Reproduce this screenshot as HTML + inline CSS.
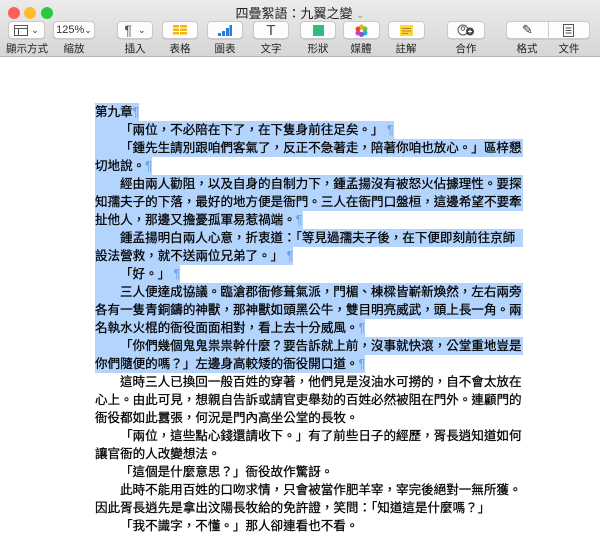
<!DOCTYPE html>
<html><head><meta charset="utf-8"><style>
*{margin:0;padding:0;box-sizing:border-box}
body{width:600px;height:523px;overflow:hidden;background:#fff;font-family:"Liberation Sans","Noto Sans CJK TC",sans-serif;position:relative}
.tb{position:absolute;left:0;top:0;width:600px;height:57px;background:linear-gradient(#ebebeb,#d6d6d6);border-bottom:1px solid #b5b5b5}
.dot{position:absolute;top:7px;width:12px;height:12px;border-radius:50%}
.title{position:absolute;top:3px;left:0;width:600px;text-align:center;font-size:13px;color:#222}
.btn{position:absolute;top:21px;height:18px;background:#fdfdfd;border:1px solid #c9c9c9;border-radius:4px;box-shadow:0 .5px 0 #bbb;font-size:11px;color:#333;display:flex;align-items:center;justify-content:center}
.lbl{position:absolute;top:41px;font-size:10.5px;color:#222;text-align:center}
.doc{position:absolute;left:95px;top:103px;width:428px;font-size:12.56px;line-height:18px;color:#000;-webkit-text-stroke:0.25px #000}
.l{height:18px;white-space:nowrap;overflow:visible}
.h{background:#b3d4fd}
span.h{display:inline-block;height:18px;vertical-align:top}
.p{color:#6a9fe6;-webkit-text-stroke:0}
.i{padding-left:25px}
</style></head><body>
<div class="tb">
<div class="dot" style="left:8px;background:#fc5f57"></div>
<div class="dot" style="left:24px;background:#fdbc2e"></div>
<div class="dot" style="left:41px;background:#2ac840"></div>
<div class="title">四疊絮語：九翼之變 <span style="color:#999;font-size:10px">⌄</span></div>
<div class="btn" style="left:8px;width:37px"><svg width="14" height="11"><rect x="0.5" y="0.5" width="13" height="10" fill="none" stroke="#555"/><line x1="0" y1="3.5" x2="14" y2="3.5" stroke="#555"/><line x1="4.5" y1="3" x2="4.5" y2="11" stroke="#555"/></svg>&nbsp;<span style="font-size:9px">⌄</span></div>
<div class="btn" style="left:53px;width:42px">125%<span style="font-size:9px">⌄</span></div>
<div class="btn" style="left:117px;width:36px"><span style="font-size:14px;color:#555">¶</span>&nbsp;&nbsp;<span style="font-size:9px">⌄</span></div>
<div class="btn" style="left:162px;width:36px"><svg width="14" height="10"><g fill="#f5b50f"><rect x="0" y="0" width="6" height="2.5"/><rect x="7" y="0" width="7" height="2.5"/><rect x="0" y="3.5" width="6" height="2.5"/><rect x="7" y="3.5" width="7" height="2.5"/><rect x="0" y="7" width="6" height="2.5"/><rect x="7" y="7" width="7" height="2.5"/></g></svg></div>
<div class="btn" style="left:207px;width:36px"><svg width="14" height="11"><g fill="#2a7be0"><rect x="0" y="8" width="3" height="3"/><rect x="4" y="6" width="3" height="5"/><rect x="8" y="3" width="3" height="8"/><rect x="11.5" y="0" width="2.5" height="11"/></g></svg></div>
<div class="btn" style="left:253px;width:36px;font-size:15px;color:#444">T</div>
<div class="btn" style="left:300px;width:36px"><div style="width:11px;height:11px;background:#2ebd7a"></div></div>
<div class="btn" style="left:343px;width:37px"><svg width="13" height="13"><g><circle cx="6.5" cy="3" r="2.5" fill="#f4b400"/><circle cx="10" cy="5" r="2.5" fill="#7cbd3a"/><circle cx="10" cy="9" r="2.5" fill="#2aa6e0"/><circle cx="6.5" cy="10.5" r="2.5" fill="#6b5bd6"/><circle cx="3" cy="9" r="2.5" fill="#d03cb0"/><circle cx="3" cy="5" r="2.5" fill="#ef4138"/></g></svg></div>
<div class="btn" style="left:388px;width:37px"><svg width="13" height="11"><rect width="13" height="11" fill="#fbd63c"/><g stroke="#b08a10"><line x1="2" y1="3.5" x2="11" y2="3.5"/><line x1="2" y1="6" x2="11" y2="6"/><line x1="2" y1="8.5" x2="8" y2="8.5"/></g></svg></div>
<div class="btn" style="left:447px;width:38px"><svg width="18" height="12"><circle cx="6" cy="6" r="5" fill="none" stroke="#555"/><circle cx="6" cy="4.5" r="1.8" fill="none" stroke="#555"/><circle cx="13" cy="7.5" r="4" fill="#444"/><path d="M13 5.5v4M11 7.5h4" stroke="#fff"/></svg></div>
<div class="btn" style="left:506px;width:84px;justify-content:space-around"><span style="font-size:13px">✎</span><span style="position:absolute;left:41px;top:0;width:1px;height:17px;background:#ccc"></span><svg width="11" height="13"><rect x="0.5" y="0.5" width="10" height="12" fill="none" stroke="#555"/><g stroke="#555"><line x1="2.5" y1="4" x2="8.5" y2="4"/><line x1="2.5" y1="6.5" x2="8.5" y2="6.5"/><line x1="2.5" y1="9" x2="8.5" y2="9"/></g></svg></div>
<div class="lbl" style="left:4px;width:46px">顯示方式</div>
<div class="lbl" style="left:54px;width:40px">縮放</div>
<div class="lbl" style="left:115px;width:40px">插入</div>
<div class="lbl" style="left:160px;width:40px">表格</div>
<div class="lbl" style="left:205px;width:40px">圖表</div>
<div class="lbl" style="left:251px;width:40px">文字</div>
<div class="lbl" style="left:298px;width:40px">形狀</div>
<div class="lbl" style="left:341px;width:40px">媒體</div>
<div class="lbl" style="left:386px;width:40px">註解</div>
<div class="lbl" style="left:446px;width:40px">合作</div>
<div class="lbl" style="left:507px;width:40px">格式</div>
<div class="lbl" style="left:549px;width:40px">文件</div>
</div>
<div class="doc">
<div class="l"><span class="h">第九章<span class="p">¶</span></span></div>
<div class="l"><span class="h"><span class="i"></span>「兩位，不必陪在下了，在下隻身前往足矣。」 <span class="p">¶</span></span></div>
<div class="l h"><span class="i"></span>「鍾先生請別跟咱們客氣了，反正不急著走，陪著你咱也放心。」區梓懇</div>
<div class="l"><span class="h">切地說。<span class="p">¶</span></span></div>
<div class="l h"><span class="i"></span>經由兩人勸阻，以及自身的自制力下，鍾孟揚沒有被怒火佔據理性。要探</div>
<div class="l h">知孺夫子的下落，最好的地方便是衙門。三人在衙門口盤桓，這邊希望不要牽</div>
<div class="l"><span class="h">扯他人，那邊又擔憂孤軍易惹禍端。<span class="p">¶</span></span></div>
<div class="l h"><span class="i"></span>鍾孟揚明白兩人心意，折衷道：「等見過孺夫子後，在下便即刻前往京師</div>
<div class="l"><span class="h">設法營救，就不送兩位兄弟了。」 <span class="p">¶</span></span></div>
<div class="l"><span class="h"><span class="i"></span>「好。」 <span class="p">¶</span></span></div>
<div class="l h"><span class="i"></span>三人便達成協議。臨滄郡衙修葺氣派，門楣、棟樑皆嶄新煥然，左右兩旁</div>
<div class="l h">各有一隻青銅鑄的神獸，那神獸如頭黑公牛，雙目明亮威武，頭上長一角。兩</div>
<div class="l"><span class="h">名執水火棍的衙役面面相對，看上去十分威風。<span class="p">¶</span></span></div>
<div class="l h"><span class="i"></span>「你們幾個鬼鬼祟祟幹什麼？要告訴就上前，沒事就快滾，公堂重地豈是</div>
<div class="l"><span class="h">你們隨便的嗎？」左邊身高較矮的衙役開口道。<span class="p">¶</span></span></div>
<div class="l"><span class="i"></span>這時三人已換回一般百姓的穿著，他們見是沒油水可撈的，自不會太放在</div>
<div class="l">心上。由此可見，想親自告訴或請官吏舉劾的百姓必然被阻在門外。連顧門的</div>
<div class="l">衙役都如此囂張，何況是門內高坐公堂的長牧。</div>
<div class="l"><span class="i"></span>「兩位，這些點心錢還請收下。」有了前些日子的經歷，胥長逍知道如何</div>
<div class="l">讓官衙的人改變想法。</div>
<div class="l"><span class="i"></span>「這個是什麼意思？」衙役故作驚訝。</div>
<div class="l"><span class="i"></span>此時不能用百姓的口吻求情，只會被當作肥羊宰，宰完後絕對一無所獲。</div>
<div class="l">因此胥長逍先是拿出汶陽長牧給的免許證，笑問：「知道這是什麼嗎？」</div>
<div class="l"><span class="i"></span>「我不識字，不懂。」那人卻連看也不看。</div>
</div>
</body></html>
